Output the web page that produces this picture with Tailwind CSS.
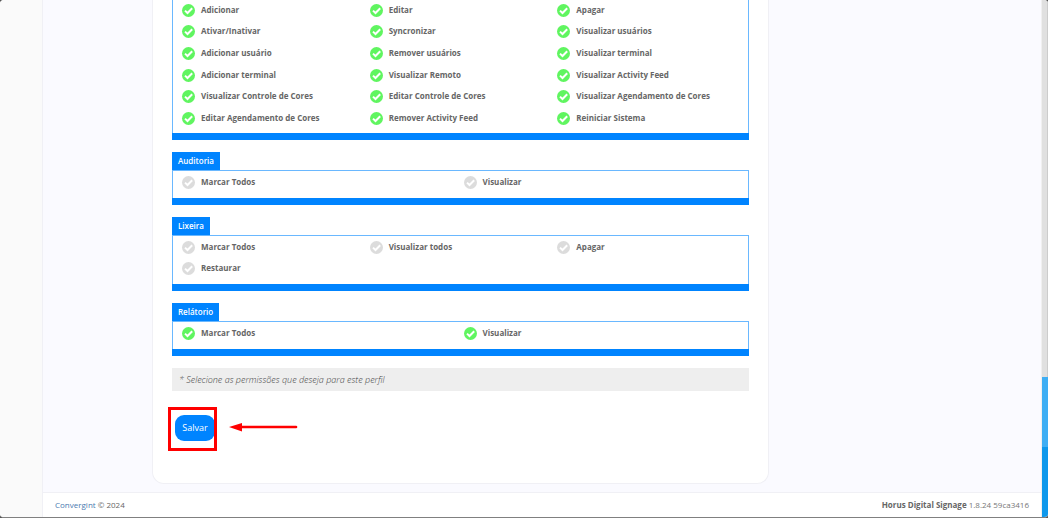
<!DOCTYPE html>
<html lang="pt-BR" class="bg-[#555]">
<head>
<meta charset="utf-8">
<title>Horus Digital Signage</title>
<script src="https://cdn.jsdelivr.net/npm/@tailwindcss/browser@4"></script>
</head>
<body class="font-['Open_Sans',sans-serif] text-[8px] leading-3 text-[#666]">
<div class="flex min-h-screen border-b border-[#808080] rounded-[4px] overflow-hidden bg-white">
  <aside class="w-[43px] shrink-0 bg-[#fafafa] border-r border-[#f0f0f5]"></aside>
  <div class="flex-1 min-w-0 flex flex-col">
    <main class="flex-1 bg-[#fafaff] pl-[109px] pr-[272px] pb-2">
      <form class="-mt-px bg-white border border-t-0 border-[#f0f0f5] rounded-b-[12px] px-[19px] pb-[42px]">
        <div id="groups" class="flex flex-col gap-3"></div>
        <p class="mt-3 bg-[#eee] px-[7px] h-[23px] flex items-center italic font-light text-[9px] text-[#444]">* Selecione as permissões que deseja para este perfil</p>
        <div class="flex items-center mt-6 ml-[3px]">
          <div class="relative">
            <button type="submit" class="block w-10 h-[26px] rounded-[9px] bg-[#0084ff] text-white text-[9px] font-normal cursor-pointer">Salvar</button>
            <div class="absolute -left-[7px] -right-0.5 -top-2 -bottom-2.5 border-3 border-[#f00] pointer-events-none"></div>
          </div>
          <svg class="ml-3.5 w-[69px] h-2.5" viewBox="0 0 69 10" aria-hidden="true"><path d="M12 4H67" stroke="#f00" stroke-width="2.600" stroke-linecap="round"/><path d="M0 4L13 0V8.500Z" fill="#f00"/></svg>
        </div>
      </form>
    </main>
    <footer class="flex justify-between items-center h-[25px] pl-3 pr-3 border-t border-[#f0f0f5] bg-white">
      <p><a href="#" class="text-[#4a7ab0]">Convergint</a> © 2024</p>
      <p><b>Horus Digital Signage</b> <span class="text-[#777]">1.8.24 59ca3416</span></p>
    </footer>
  </div>
  <div class="w-[7px] shrink-0 flex flex-col border-l border-[#f0f0f0]" aria-hidden="true">
    <div class="h-[377px] bg-[#e0e0e0] border-r border-[#ccc]"></div>
    <div class="h-[70px] bg-[#3eaef4]"></div>
    <div class="flex-1 bg-[#0e98ec]"></div>
  </div>
</div>
<script>
const groups = [
  { cols: 'grid-cols-3', size: 'h-[130px]', on: true, items: ['Adicionar','Editar','Apagar','Ativar/Inativar','Syncronizar','Visualizar usuários','Adicionar usuário','Remover usuários','Visualizar terminal','Adicionar terminal','Visualizar Remoto','Visualizar Activity Feed','Visualizar Controle de Cores','Editar Controle de Cores','Visualizar Agendamento de Cores','Editar Agendamento de Cores','Remover Activity Feed','Reiniciar Sistema'] },
  { name: 'Auditoria', cols: 'grid-cols-2', size: 'h-[22px]', on: false, items: ['Marcar Todos','Visualizar'] },
  { name: 'Lixeira', cols: 'grid-cols-3', size: 'h-[43px]', on: false, items: ['Marcar Todos','Visualizar todos','Apagar','Restaurar'] },
  { name: 'Relátorio', cols: 'grid-cols-2', size: 'h-[22px]', on: true, items: ['Marcar Todos','Visualizar'] }
];
const item = (text, on) => `
  <label class="flex items-center gap-1.5 pl-[3px] cursor-pointer">
    <span class="grid mt-px">
      <input type="checkbox" ${on ? 'checked' : ''} class="col-start-1 row-start-1 appearance-none size-[13px] rounded-full bg-[#dcdcdc] checked:bg-[#60f560]">
      <svg class="col-start-1 row-start-1 size-[13px] pointer-events-none" viewBox="0 0 13 13" fill="none" stroke="#fff" stroke-width="2"><path d="M3 6.600L5.500 9L10.200 4.300"/></svg>
    </span>
    <span class="font-bold">${text}</span>
  </label>`;
document.getElementById('groups').innerHTML = groups.map(g => `
  <fieldset class="min-w-0">
    ${g.name ? `<legend class="block bg-[#0084ff] text-white font-semibold px-1.5 h-[18px] leading-[18px]">${g.name}</legend>` : ''}
    <div class="border-x border-[#6ab8ff] ${g.name ? 'border-t pb-[5px]' : 'pb-1'}">
      <div class="grid auto-rows-fr px-1.5 ${g.cols} ${g.size}">${g.items.map(t => item(t, g.on)).join('')}</div>
    </div>
    <div class="h-[7px] bg-[#0084ff]"></div>
  </fieldset>`).join('');
</script>
</body>
</html>
